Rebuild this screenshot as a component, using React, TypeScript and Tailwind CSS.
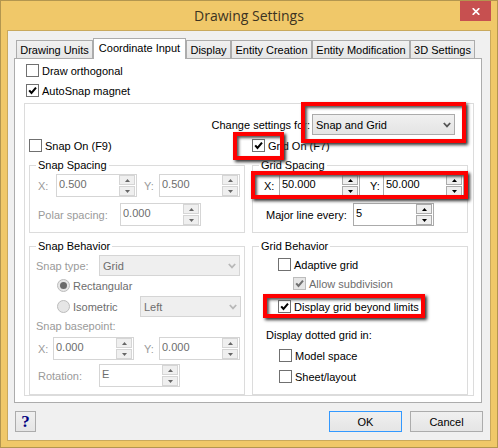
import type { PropsWithChildren } from 'react';
import { useState } from 'react';
import clsx from 'clsx';

const TABS = [
  { name: 'Drawing Units', width: 'w-[77px]' },
  { name: 'Coordinate Input', width: 'w-[93px]' },
  { name: 'Display', width: 'w-[45px]' },
  { name: 'Entity Creation', width: 'w-[81px]' },
  { name: 'Entity Modification', width: 'w-[98px]' },
  { name: '3D Settings', width: 'w-[65px]' },
];

const Highlight = ({ className }: { className: string }) => (
  <span
    className={clsx(
      'pointer-events-none absolute z-10 border-4 border-[#fe0000] shadow-[2px_2px_3px_#333,inset_2px_2px_3px_#555]',
      className,
    )}
  />
);

interface CheckProps {
  label: string;
  type?: 'checkbox' | 'radio';
  name?: string;
  checked?: boolean;
  disabled?: boolean;
  className?: string;
}

const Check = ({ label, type = 'checkbox', name, checked, disabled, className }: CheckProps) => (
  <label
    className={clsx('relative flex h-[13px] w-fit items-center gap-[3px]', disabled && 'text-[#6d6d6d]', className)}
  >
    <input
      type={type}
      name={name}
      defaultChecked={checked}
      disabled={disabled}
      className={clsx(
        'peer size-[13px] shrink-0 appearance-none border',
        type === 'radio' && 'rounded-full',
        disabled ? 'border-[#bcbcbc] bg-[#e6e6e6]' : 'border-[#707070] bg-white',
      )}
    />
    {type === 'radio' ? (
      <span className="pointer-events-none absolute left-[3px] top-[3px] hidden size-[7px] rounded-full bg-[#6a6a6a] peer-checked:block" />
    ) : (
      <svg
        viewBox="0 0 13 13"
        className="pointer-events-none absolute left-0 top-0 hidden size-[13px] peer-checked:block"
      >
        <path
          d="M3.2 6.3 5.5 9 10 3.6"
          fill="none"
          stroke={disabled ? '#707070' : '#000'}
          strokeWidth="2"
        />
      </svg>
    )}
    <span className="whitespace-nowrap">{label}</span>
  </label>
);

interface SpinnerProps {
  id: string;
  label: string;
  value: string;
  labelWidth: string;
  disabled?: boolean;
}

const Spinner = ({ id, label, value, labelWidth, disabled }: SpinnerProps) => {
  const border = disabled ? 'border-[#d5d5d5]' : 'border-[#ababab]';
  const arrow = disabled ? '#666' : '#000';
  const button = clsx('flex h-[10px] items-center justify-center border bg-[#efefef]', border);

  return (
    <div className="flex h-[23px] items-center">
      <label htmlFor={id} className={clsx('whitespace-nowrap', labelWidth, disabled && 'text-[#9a9a9a]')}>
        {label}
      </label>
      <div className={clsx('flex h-[23px] w-[81px] border bg-white', border)}>
        <input
          id={id}
          defaultValue={value}
          disabled={disabled}
          className={clsx('h-[18px] min-w-0 flex-1 pl-0.5 outline-none', disabled && 'text-[#6d6d6d]')}
        />
        <div className="flex w-[17px] flex-col justify-between pr-px">
          <button type="button" aria-label="Increase" disabled={disabled} className={button}>
            <svg viewBox="0 0 5 3" className="h-[3px] w-[5px]">
              <path d="M0 3 2.5 0 5 3Z" fill={arrow} />
            </svg>
          </button>
          <button type="button" aria-label="Decrease" disabled={disabled} className={button}>
            <svg viewBox="0 0 5 3" className="h-[3px] w-[5px]">
              <path d="M0 0 2.5 3 5 0Z" fill={arrow} />
            </svg>
          </button>
        </div>
      </div>
    </div>
  );
};

interface DropdownProps {
  id: string;
  options: string[];
  width: string;
  disabled?: boolean;
  label?: string;
}

const Dropdown = ({ id, options, width, disabled, label }: DropdownProps) => (
  <div className={clsx('relative h-[21px]', width)}>
    <select
      id={id}
      aria-label={label}
      disabled={disabled}
      className={clsx(
        'h-[21px] w-full appearance-none border pl-[3px] opacity-100',
        disabled
          ? 'border-[#d5d5d5] bg-[#efefef] text-[#6d6d6d]'
          : 'border-[#ababab] bg-linear-to-b from-[#f0f0f0] to-[#e4e4e4]',
      )}
    >
      {options.map((option) => (
        <option key={option}>{option}</option>
      ))}
    </select>
    <svg viewBox="0 0 8 6" className="pointer-events-none absolute right-1 top-2 h-1.5 w-2">
      <path d="M.8 1 4 4.4 7.2 1" fill="none" stroke={disabled ? '#b8b8b8' : '#555'} strokeWidth="1.8" />
    </svg>
  </div>
);

const Group = ({ title, className, children }: PropsWithChildren<{ title: string; className?: string }>) => (
  <fieldset className="min-w-0 border border-[#dcdcdc] pt-px">
    <legend className="ml-[6px] h-4 px-0.5 leading-4">{title}</legend>
    <div className={className}>{children}</div>
  </fieldset>
);

export default function App() {
  const [activeTab, setActiveTab] = useState('Coordinate Input');

  return (
    <main className="flex min-h-screen flex-col border border-[#b3964f] bg-[#f0c869] px-1.5 pb-1.5 font-['Liberation_Sans',Arial,sans-serif] text-[11px] leading-4 text-black">
      <header className="relative h-[29px] shrink-0">
        <h1 className="text-center font-['Open_Sans','Noto_Sans',sans-serif] text-[14px] leading-[29px] text-[#3c3322]">
          Drawing Settings
        </h1>
        <button
          type="button"
          aria-label="Close"
          className="absolute right-0 top-0 flex h-5 w-[31px] items-center justify-center bg-[#c75050]"
        >
          <svg viewBox="0 0 8 7" className="h-[7px] w-2">
            <path d="M.7.2 7.3 6.8M7.3.2.7 6.8" stroke="#fff" strokeWidth="1.7" />
          </svg>
        </button>
      </header>

      <div className="flex-1 border border-[#c9a95d] bg-[#f0f0f0] pb-2 pt-[7px]">
        <div role="tablist" className="ml-2 flex h-5 items-end">
          {TABS.map(({ name, width }) => (
            <button
              key={name}
              type="button"
              role="tab"
              aria-selected={name === activeTab}
              onClick={() => setActiveTab(name)}
              className={clsx(
                'whitespace-nowrap border border-b-0 border-[#acacac] text-center',
                width,
                name === activeTab
                  ? 'relative -mb-px h-[21px] bg-white pb-0.5'
                  : 'h-[18px] bg-linear-to-b from-[#f0f0f0] to-[#e6e6e6]',
              )}
            >
              {name}
            </button>
          ))}
        </div>

        <section className="ml-1.5 mr-2 border border-[#acacac] bg-white pb-1.5 pl-[9px] pr-[7px] pt-[5px]">
          <Check label="Draw orthogonal" className="ml-0.5" />
          <Check label="AutoSnap magnet" checked className="ml-0.5 mt-[7px]" />

          <div className="mt-1.5 border border-[#dcdcdc] pl-1 pr-[5px] pt-2.5">
            <div className="mr-[13px] flex items-center justify-end gap-0.5">
              <label htmlFor="change-settings" className="whitespace-nowrap">
                Change settings for:
              </label>
              <div className="relative">
                <Dropdown id="change-settings" options={['Snap and Grid']} width="w-[143px]" />
                <Highlight className="-bottom-2 -left-[11px] -right-[11px] -top-3" />
              </div>
            </div>

            <div className="mt-1 grid grid-cols-2 gap-[7px]">
              <Check label="Snap On (F9)" />
              <div className="relative">
                <Check label="Grid On (F7)" checked />
                <Highlight className="-left-[19px] -top-[7px] h-7 w-[51px]" />
              </div>
            </div>

            <div className="mt-[5px] grid grid-cols-2 gap-[7px]">
              <Group title="Snap Spacing" className="pb-1.5 pl-2">
                <div className="flex gap-[7px]">
                  <Spinner id="snap-x" label="X:" value="0.500" labelWidth="w-[18px]" disabled />
                  <Spinner id="snap-y" label="Y:" value="0.500" labelWidth="w-[15px]" disabled />
                </div>
                <div className="mt-1.5">
                  <Spinner id="polar" label="Polar spacing:" value="0.000" labelWidth="w-[82px]" disabled />
                </div>
              </Group>
              <Group title="Grid Spacing" className="pb-1.5">
                <div className="relative flex gap-2.5 pl-[11px]">
                  <Spinner id="grid-x" label="X:" value="50.000" labelWidth="w-[15px]" />
                  <Spinner id="grid-y" label="Y:" value="50.000" labelWidth="w-[13px]" />
                  <Highlight className="-bottom-0.5 -left-0.5 -right-px -top-[3px]" />
                </div>
                <div className="ml-[13px] mt-1.5">
                  <Spinner id="major" label="Major line every:" value="5" labelWidth="w-[87px]" />
                </div>
              </Group>
            </div>

            <div className="mt-[5px] grid grid-cols-2 gap-[7px]">
              <Group title="Snap Behavior" className="pb-[7px] pl-1.5">
                <div className="flex items-center">
                  <label htmlFor="snap-type" className="w-[63px] whitespace-nowrap text-[#9a9a9a]">
                    Snap type:
                  </label>
                  <Dropdown id="snap-type" options={['Grid']} width="w-[141px]" disabled />
                </div>
                <Check label="Rectangular" type="radio" name="snap-style" checked disabled className="ml-[21px] mt-[3px]" />
                <div className="ml-[21px] mt-1 flex items-center">
                  <div className="w-[83px]">
                    <Check label="Isometric" type="radio" name="snap-style" disabled />
                  </div>
                  <Dropdown id="isometric-plane" label="Isometric plane" options={['Left']} width="w-[101px]" disabled />
                </div>
                <p className="mt-px text-[#9a9a9a]">Snap basepoint:</p>
                <div className="ml-0.5 mt-[3px] flex gap-2.5">
                  <Spinner id="base-x" label="X:" value="0.000" labelWidth="w-[15px]" disabled />
                  <Spinner id="base-y" label="Y:" value="0.000" labelWidth="w-[15px]" disabled />
                </div>
                <div className="ml-0.5 mt-1">
                  <Spinner id="rotation" label="Rotation:" value="E" labelWidth="w-[61px]" disabled />
                </div>
              </Group>
              <Group title="Grid Behavior" className="pl-[13px]">
                <Check label="Adaptive grid" className="ml-3 mt-[3px]" />
                <Check label="Allow subdivision" checked disabled className="ml-[27px] mt-1.5" />
                <div className="relative mt-2.5">
                  <Check label="Display grid beyond limits" checked className="ml-3" />
                  <Highlight className="-left-[3px] -top-1.5 h-6 w-[162px]" />
                </div>
                <p className="mt-3.5">Display dotted grid in:</p>
                <Check label="Model space" className="ml-[13px] mt-1.5" />
                <Check label="Sheet/layout" className="ml-[13px] mt-2" />
              </Group>
            </div>
          </div>
        </section>

        <footer className="mx-[7px] mt-2 flex gap-2">
          <button
            type="button"
            aria-label="Help"
            className="mr-auto size-[21px] border border-[#acacac] bg-linear-to-b from-[#f0f0f0] to-[#e5e5e5] font-['Liberation_Serif',serif] text-[17px] font-bold leading-[19px] text-[#000080]"
          >
            ?
          </button>
          <button type="button" className="h-[21px] w-[73px] border border-[#3399ff] bg-linear-to-b from-[#f0f0f0] to-[#e5e5e5]">
            OK
          </button>
          <button type="button" className="h-[21px] w-[73px] border border-[#acacac] bg-linear-to-b from-[#f0f0f0] to-[#e5e5e5]">
            Cancel
          </button>
        </footer>
      </div>
    </main>
  );
}
